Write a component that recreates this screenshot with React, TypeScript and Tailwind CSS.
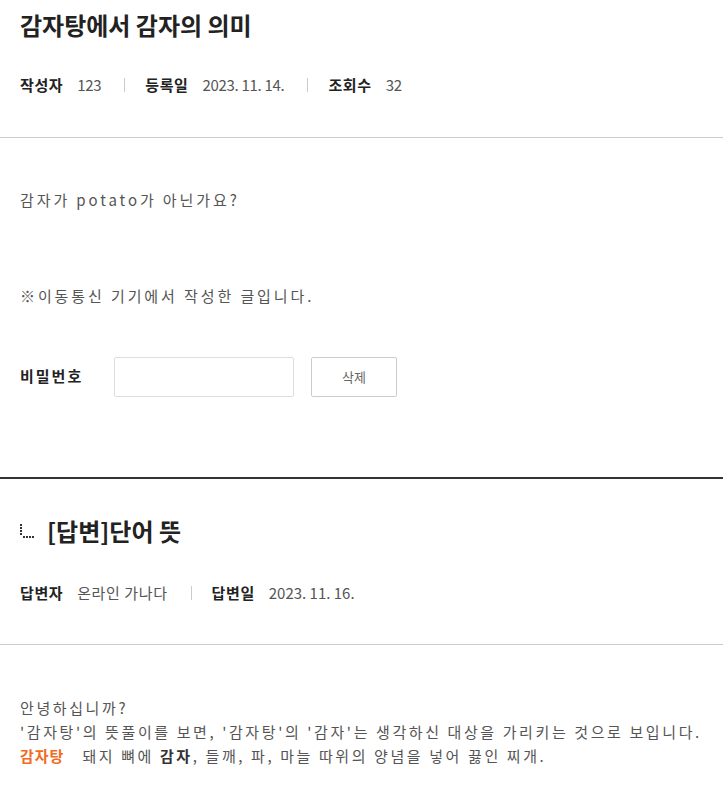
import React from 'react';

const font = { fontFamily: '"Noto Sans CJK KR", "Noto Sans", sans-serif' };

type Item = { label: string; value: string; cls?: string };

const Meta = ({ items }: { items: Item[] }) => (
  <div className="flex items-center text-[15px] text-[#333]">
    {items.map((it, i) => (
      <div key={it.label} className="flex items-center">
        {i > 0 && <span className="ml-[23px] mr-[20px] h-[14px] w-px bg-[#ccc]" />}
        <span className="font-bold text-[#222] tracking-[0.6px]">{it.label}</span>
        <span className={'ml-[14px] text-[#555] ' + (it.cls ?? 'tracking-[-0.3px]')}>{it.value}</span>
      </div>
    ))}
  </div>
);

const ReplyIcon = () => (
  <svg width="14" height="14" viewBox="0 0 14 14" className="mr-[13px]">
    {[0, 3, 6, 9].map(y => (
      <rect key={'v' + y} x="0" y={y} width="2" height="2" fill="#333" />
    ))}
    {[3, 6, 9, 12].map(x => (
      <rect key={'h' + x} x={x} y="12" width="2" height="2" fill="#333" />
    ))}
  </svg>
);

export default function App() {
  return (
    <div className="min-h-screen bg-white" style={font}>
      <div className="px-5 pt-[7px]">
        <h1 className="text-[24px] font-bold text-[#222] leading-[36px]">감자탕에서 감자의 의미</h1>
        <div className="mt-[31px] pb-[40px]">
          <Meta
            items={[
              { label: '작성자', value: '123' },
              { label: '등록일', value: '2023. 11. 14.' },
              { label: '조회수', value: '32' },
            ]}
          />
        </div>
      </div>
      <div className="h-px bg-[#ccc]" />

      <div className="px-5 pt-[50px] text-[15px] tracking-[2.9px] text-[#555]">
        <p className="leading-[24px]">감자가 potato가 아닌가요?</p>
        <p className="mt-[72px] leading-[24px]">※이동통신 기기에서 작성한 글입니다.</p>
        <div className="mt-[49px] flex items-center">
          <span className="w-[94px] font-bold text-[#222] tracking-[2px]">비밀번호</span>
          <input className="h-[40px] w-[180px] rounded-[2px] border border-[#ddd] outline-none" />
          <button className="ml-[17px] h-[40px] w-[86px] rounded-[2px] border border-[#ccc] bg-white text-[13px] text-[#666] tracking-normal">
            삭제
          </button>
        </div>
      </div>

      <div className="mt-[80px] h-[2px] bg-[#333]" />

      <div className="px-5 pt-[34px]">
        <div className="flex items-center">
          <ReplyIcon />
          <h2 className="text-[24px] font-bold text-[#222] leading-[36px]">[답변]단어 뜻</h2>
        </div>
        <div className="mt-[33px] pb-[40px]">
          <Meta
            items={[
              { label: '답변자', value: '온라인 가나다', cls: 'tracking-[0.6px]' },
              { label: '답변일', value: '2023. 11. 16.', cls: 'tracking-[0px]' },
            ]}
          />
        </div>
      </div>
      <div className="h-px bg-[#ccc]" />

      <div className="px-5 pt-[51px] text-[15px] tracking-[2.6px] text-[#555] leading-[24px] whitespace-nowrap">
        <p>안녕하십니까?</p>
        <p>'감자탕'의 뜻풀이를 보면, '감자탕'의 '감자'는 생각하신 대상을 가리키는 것으로 보입니다.</p>
        <p>
          <span className="font-bold text-[#f26b21] mr-[18px] tracking-[1px]">감자탕</span>
          돼지 뼈에 <span className="font-bold text-[#333]">감자</span>, 들깨, 파, 마늘 따위의 양념을 넣어 끓인 찌개.
        </p>
      </div>
    </div>
  );
}
